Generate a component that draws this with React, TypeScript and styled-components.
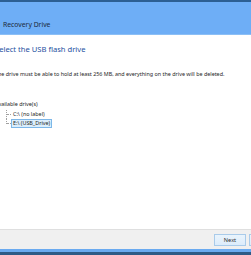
import { FunctionComponent } from "react";
import styled, { createGlobalStyle } from "styled-components";

const GlobalStyle = createGlobalStyle`
  html, body {
    margin: 0;
    padding: 0;
    width: 251px;
    height: 255px;
    overflow: hidden;
    background: #ffffff;
  }
`;

const WindowRoot = styled.div`
  width: 251px;
  height: 255px;
  display: flex;
  flex-direction: column;
  font-family: "Noto Sans", "Open Sans", sans-serif;
  color: #1e1e1e;
  overflow: hidden;
`;
const TopStrip = styled.div`
  height: 2px;
  background-color: #2c5f93;
  flex-shrink: 0;
`;
const TitleBand = styled.div`
  height: 33px;
  background-color: #6eaef6;
  border-bottom: 1px solid #8cbff5;
  display: flex;
  align-items: flex-end;
  padding: 0 0 5px 3px;
  box-sizing: border-box;
  flex-shrink: 0;
`;
const TitleText = styled.div`
  font-size: 6.8px;
  line-height: 9px;
  color: #1b2a3a;
`;
const Content = styled.div`
  flex: 1;
  background-color: #ffffff;
  display: flex;
  flex-direction: column;
  align-items: flex-start;
  margin-left: -5px;
  padding-top: 9px;
`;
const Heading = styled.div`
  font-size: 7.6px;
  line-height: 11px;
  color: #1d4fa0;
`;
const Body = styled.div`
  margin-top: 16px;
  font-size: 5.4px;
  line-height: 7px;
  color: #262626;
  white-space: nowrap;
`;
const ListLabel = styled.div`
  margin-top: 23px;
  font-size: 5.4px;
  line-height: 7px;
  color: #262626;
`;
const Tree = styled.div`
  display: flex;
  flex-direction: column;
  margin-left: 11px;
  margin-top: 2px;
`;
const TreeRow = styled.div`
  display: flex;
  align-items: center;
  height: 9px;
`;
const Branch = styled.div<{ $last?: boolean }>`
  width: 5px;
  height: 9px;
  position: relative;
  border-left: 1px dotted #a0a0a0;
  box-sizing: border-box;
  ${(p) => (p.$last ? "height: 5px; align-self: flex-start;" : "")}
  &::after {
    content: "";
    position: absolute;
    left: 0;
    top: 4px;
    width: 4px;
    border-top: 1px dotted #a0a0a0;
  }
`;
const Item = styled.div<{ $selected?: boolean }>`
  font-size: 5.4px;
  line-height: 7px;
  padding: 0 1px;
  color: #262626;
  border: 1px solid ${(p) => (p.$selected ? "#7db7e8" : "transparent")};
  background-color: ${(p) => (p.$selected ? "#dbeefc" : "transparent")};
`;
const Footer = styled.div`
  height: 20px;
  background-color: #f0f0f0;
  border-top: 1px solid #dfdfdf;
  display: flex;
  align-items: center;
  justify-content: flex-end;
  gap: 3px;
  flex-shrink: 0;
  box-sizing: border-box;
  margin-right: -30px;
`;
const Button = styled.div`
  width: 32px;
  height: 12px;
  box-sizing: border-box;
  border: 1px solid #a9cbea;
  background: linear-gradient(#eaf4fc, #dcecfb);
  display: flex;
  align-items: center;
  justify-content: center;
  font-size: 5.6px;
  color: #2a2a2a;
`;
const BlueStrip = styled.div`
  height: 3px;
  background-color: #6aaaf0;
  flex-shrink: 0;
`;
const DarkStrip = styled.div`
  height: 3px;
  background-color: #2e5a86;
  flex-shrink: 0;
`;

const App: FunctionComponent = () => {
  return (
    <>
      <GlobalStyle />
      <WindowRoot>
        <TopStrip />
        <TitleBand>
          <TitleText>Recovery Drive</TitleText>
        </TitleBand>
        <Content>
          <Heading>Select the USB flash drive</Heading>
          <Body>
            The drive must be able to hold at least 256 MB, and everything on
            the drive will be deleted.
          </Body>
          <ListLabel>Available drive(s)</ListLabel>
          <Tree>
            <TreeRow>
              <Branch />
              <Item>C:\ (no label)</Item>
            </TreeRow>
            <TreeRow>
              <Branch $last />
              <Item $selected>E:\ (USB_Drive)</Item>
            </TreeRow>
          </Tree>
        </Content>
        <Footer>
          <Button>Next</Button>
          <Button>Cancel</Button>
        </Footer>
        <BlueStrip />
        <DarkStrip />
      </WindowRoot>
    </>
  );
};

export default App;
